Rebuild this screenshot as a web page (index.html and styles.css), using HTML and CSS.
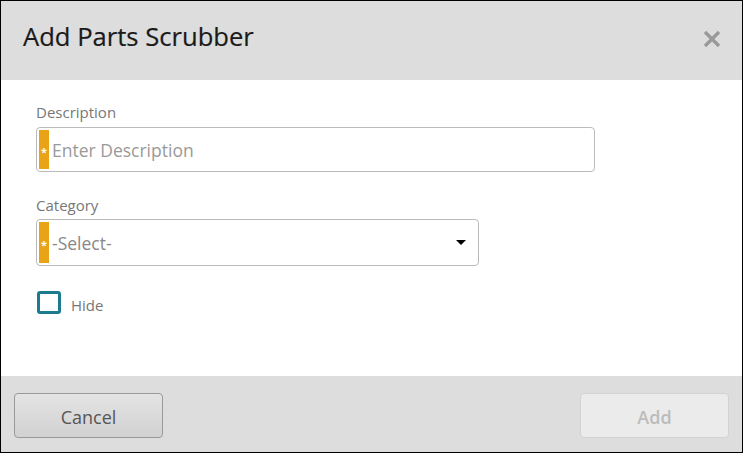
FILE: index.html
```html
<!DOCTYPE html>
<html>
<head>
<meta charset="utf-8">
<link rel="stylesheet" href="styles.css">
</head>
<body>
<div class="dialog">
  <div class="header">
    <h1 class="title">Add Parts Scrubber</h1>
    <span class="close">
      <svg width="18" height="18" viewBox="0 0 18 18"><path d="M2 2 L16 16 M16 2 L2 16" stroke="#999" stroke-width="3.2" stroke-linecap="butt"/></svg>
    </span>
  </div>
  <div class="body">
    <label class="label">Description</label>
    <div class="field desc">
      <span class="req"><span class="star">*</span></span>
      <span class="placeholder">Enter Description</span>
    </div>
    <label class="label cat">Category</label>
    <div class="field select">
      <span class="req"><span class="star">*</span></span>
      <span class="placeholder">-Select-</span>
      <span class="arrow"></span>
    </div>
    <div class="check-row">
      <span class="checkbox"></span>
      <span class="check-label">Hide</span>
    </div>
  </div>
  <div class="footer">
    <button class="btn cancel">Cancel</button>
    <button class="btn add">Add</button>
  </div>
</div>
</body>
</html>
```
FILE: styles.css
```css
* { box-sizing: border-box; }
html, body { margin: 0; padding: 0; }
body { font-family: "Open Sans", "Liberation Sans", sans-serif; background: #fff; }
.dialog {
  width: 743px; height: 453px;
  border: 1px solid #000;
  display: flex; flex-direction: column;
  background: #fff;
}
.header {
  height: 79px; background: #dddddd;
  display: flex; align-items: center; justify-content: space-between;
  padding: 0 21px 0 22px;
}
.title { margin: -7px 0 0 0; font-size: 25.6px; line-height: 32px; font-weight: 500; color: #1a1a1a; -webkit-text-stroke: 0.2px #1a1a1a; }
.close { display: flex; width: 18px; height: 18px; margin-top: -4px; }
.body {
  flex: 1; padding: 22px 0 0 35px;
  display: flex; flex-direction: column; align-items: flex-start;
}
.label { font-size: 15px; line-height: 21px; color: #777; margin-bottom: 4px; }
.label.cat { margin-top: 23px; margin-bottom: 3px; }
.field {
  border: 1px solid #bbb; border-radius: 4px; background: #fff;
  display: flex; align-items: center; padding: 2px; position: relative;
}
.field.desc { width: 559px; height: 45px; }
.field.select { width: 443px; height: 47px; }
.req {
  width: 10px; align-self: stretch; background: #e8a317;
  display: flex; align-items: center; justify-content: center;
}
.star { color: #fff; font-size: 11px; font-weight: 700; line-height: 1; margin-top: 3px; }
.placeholder { font-size: 17.5px; color: #999; margin-left: 3px; }
.select .placeholder { color: #888; }
.arrow {
  margin-left: auto; margin-right: 10px;
  width: 0; height: 0;
  border-left: 5px solid transparent; border-right: 5px solid transparent;
  border-top: 5px solid #000;
}
.check-row { display: flex; align-items: center; margin-top: 24px; margin-left: 1px; }
.checkbox {
  width: 24px; height: 23px; border: 3px solid #1c7b8e; border-radius: 3px; background: #fff;
}
.check-label { font-size: 15px; color: #777; margin-left: 10px; margin-top: 5px; }
.footer {
  height: 76px; background: #dddddd;
  display: flex; justify-content: space-between; align-items: flex-start;
  padding: 17px 13px 0 13px;
}
.btn {
  width: 149px; height: 45px; border-radius: 4px; padding: 3px 0 0 0;
  font-family: "Open Sans", "Liberation Sans", sans-serif; font-size: 18px; font-weight: 500;
}
.cancel {
  background: linear-gradient(#e4e4e4, #d1d1d1); border: 1px solid #999; color: #555;
}
.add { background: #ebebeb; border: 1px solid #d2d2d2; color: #bcbcbc; font-weight: 600; }
```
